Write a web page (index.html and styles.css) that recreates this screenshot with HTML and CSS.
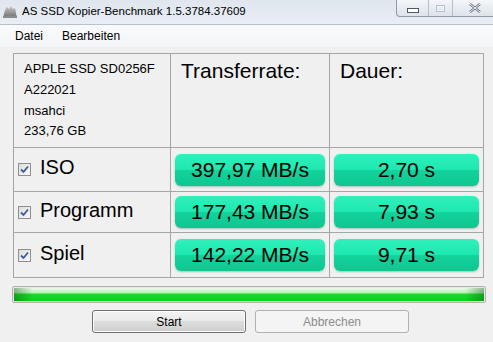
FILE: index.html
```html
<!DOCTYPE html>
<html lang="de">
<head>
  <meta charset="UTF-8">
  <title>AS SSD Kopier-Benchmark</title>
  <link rel="stylesheet" href="styles.css">
</head>
<body>
  <div class="window">
    <!-- Title bar -->
    <div class="titlebar">
      <svg class="app-icon" width="16" height="14" viewBox="0 0 16 14">
        <defs>
          <linearGradient id="ig" x1="0" y1="0" x2="0" y2="1">
            <stop offset="0" stop-color="#c8c8c8"/>
            <stop offset="1" stop-color="#6e6e6e"/>
          </linearGradient>
        </defs>
        <path d="M1 13 L3 5 L5 2 L7 4 L9 1 L11 4 L13 3 L15 13 Z" fill="url(#ig)"/>
        <rect x="1" y="11" width="14" height="2" fill="#8a8a8a"/>
      </svg>
      <span class="title">AS SSD Kopier-Benchmark 1.5.3784.37609</span>
      <div class="win-buttons">
        <div class="wb wb-min"><span class="min-glyph"></span></div>
        <div class="wb wb-max"><span class="max-glyph"></span></div>
        <div class="wb wb-close">
          <svg width="12" height="10" viewBox="0 0 12 10">
            <path d="M1 1 L11 9 M11 1 L1 9" stroke="#6c7480" stroke-width="2.4" fill="none"/>
            <path d="M1 1 L11 9 M11 1 L1 9" stroke="#f4f6f8" stroke-width="1" fill="none"/>
          </svg>
        </div>
      </div>
    </div>

    <!-- Menu -->
    <div class="menubar">
      <span class="menu-item">Datei</span>
      <span class="menu-item">Bearbeiten</span>
    </div>

    <div class="content">
      <div class="result-grid">
        <div class="cell drive-info">
          <div>APPLE SSD SD0256F</div>
          <div>A222021</div>
          <div>msahci</div>
          <div class="last">233,76 GB</div>
        </div>
        <div class="cell head">Transferrate:</div>
        <div class="cell head">Dauer:</div>

        <div class="cell test"><span class="check"><svg width="9" height="9" viewBox="0 0 9 9"><path d="M1 4.5 L3.5 7 L8 1.5" stroke="#3d5a9e" stroke-width="1.8" fill="none"/></svg></span><span class="label">ISO</span></div>
        <div class="cell"><div class="pill">397,97 MB/s</div></div>
        <div class="cell"><div class="pill">2,70 s</div></div>

        <div class="cell test"><span class="check"><svg width="9" height="9" viewBox="0 0 9 9"><path d="M1 4.5 L3.5 7 L8 1.5" stroke="#3d5a9e" stroke-width="1.8" fill="none"/></svg></span><span class="label">Programm</span></div>
        <div class="cell"><div class="pill">177,43 MB/s</div></div>
        <div class="cell"><div class="pill">7,93 s</div></div>

        <div class="cell test"><span class="check"><svg width="9" height="9" viewBox="0 0 9 9"><path d="M1 4.5 L3.5 7 L8 1.5" stroke="#3d5a9e" stroke-width="1.8" fill="none"/></svg></span><span class="label">Spiel</span></div>
        <div class="cell"><div class="pill">142,22 MB/s</div></div>
        <div class="cell"><div class="pill">9,71 s</div></div>
      </div>

      <div class="progress"><div class="progress-fill"></div></div>

      <div class="actions">
        <button class="btn">Start</button>
        <button class="btn" disabled>Abbrechen</button>
      </div>
    </div>
  </div>
</body>
</html>
```

FILE: styles.css
```css
body {
  margin: 0;
  width: 493px;
  height: 342px;
  overflow: hidden;
  font-family: 'Liberation Sans', Arial, sans-serif;
  background-color: #f0f0f0;
  color: #000;
}

.window {
  display: flex;
  flex-direction: column;
  height: 342px;
}

/* ===== Title bar ===== */
.titlebar {
  height: 25px;
  display: flex;
  align-items: flex-start;
  background: linear-gradient(#dfe6ee, #e9eef4);
  border-bottom: 1px solid #b9c2cc;
  box-sizing: border-box;
}

.app-icon {
  margin: 5px 0 0 2px;
}

.title {
  margin: 5px 0 0 4px;
  font-size: 11.5px;
  color: #000;
}

.win-buttons {
  margin-left: auto;
  display: flex;
  height: 17px;
  border: 1px solid #8f9aa8;
  border-top: none;
  border-radius: 0 0 4px 4px;
  margin-right: -4px;
  background: linear-gradient(#f4f6f9, #dde3ea);
  box-sizing: border-box;
}

.wb {
  display: flex;
  align-items: center;
  justify-content: center;
  border-right: 1px solid #b3bcc7;
}

.wb-min { width: 31px; }
.wb-max { width: 23px; }
.wb-close { width: 43px; border-right: none; }

.min-glyph {
  width: 10px;
  height: 3px;
  margin-top: 4px;
  border: 1px solid #4f5866;
  background: #fff;
}

.max-glyph {
  width: 7px;
  height: 5px;
  border: 1px solid #b8c0ca;
  box-shadow: inset 0 0 0 1px #f2f4f7;
}

/* ===== Menu ===== */
.menubar {
  height: 22px;
  display: flex;
  align-items: center;
  gap: 19px;
  padding-left: 15px;
  background: linear-gradient(#f9fafb, #f4f5f7);
  font-size: 12px;
}

/* ===== Results ===== */
.content {
  padding: 6px 0 0 13px;
}

.result-grid {
  display: grid;
  grid-template-columns: 156px 158px 153px;
  grid-template-rows: 93px 43px 40px 44px;
  gap: 1px;
  padding: 1px;
  width: max-content;
  background-color: #a6a6a6;
}

.cell {
  background-color: #f0f0f0;
  display: flex;
  align-items: center;
  padding: 0 4px;
}

.drive-info {
  flex-direction: column;
  align-items: flex-start;
  padding: 4px 0 0 10px;
  font-size: 13px;
  line-height: 21px;
}

.drive-info .last {
  line-height: 19px;
}

.head {
  align-items: flex-start;
  padding: 5px 0 0 10px;
  font-size: 21px;
}

.test {
  font-size: 20px;
  padding-left: 4px;
}

.label {
  margin-top: -4px;
}

.check {
  width: 11px;
  height: 11px;
  border: 1px solid #8e8f8f;
  background: linear-gradient(135deg, #dcdcdc, #fafafa);
  display: flex;
  align-items: center;
  justify-content: center;
  margin-right: 9px;
}

.pill {
  flex: 1;
  height: 32px;
  border-radius: 6px;
  display: flex;
  align-items: center;
  justify-content: center;
  font-size: 21px;
  background: linear-gradient(#30f0bb 0%, #1ee8b0 48%, #13d29b 52%, #10c690 100%);
  box-shadow: 0 1px 2px rgba(0, 120, 80, 0.35);
}

/* ===== Progress ===== */
.progress {
  width: 474px;
  height: 17px;
  margin: 8px 0 0 -1px;
  border: 1px solid #b2b2b2;
  border-radius: 2px;
  box-sizing: border-box;
  background: #e6e6e6;
  padding: 1px;
}

.progress-fill {
  height: 100%;
  background:
    linear-gradient(90deg, rgba(0, 80, 0, 0.4), rgba(0, 80, 0, 0) 4%, rgba(0, 80, 0, 0) 96%, rgba(0, 80, 0, 0.4)),
    linear-gradient(#eefaee 0%, #b6f2b6 35%, #1ad92d 50%, #05d31a 100%);
}

/* ===== Buttons ===== */
.actions {
  display: flex;
  gap: 9px;
  margin: 7px 0 0 79px;
}

.btn {
  width: 154px;
  height: 23px;
  border: 1px solid #707070;
  border-radius: 3px;
  font-family: 'Liberation Sans', Arial, sans-serif;
  font-size: 12px;
  color: #000;
  background: linear-gradient(#f2f2f2 0%, #ebebeb 45%, #dddddd 50%, #cfcfcf 100%);
  box-shadow: inset 0 0 0 1px #fcfcfc;
}

.btn:disabled {
  color: #8d8d8d;
  border-color: #adb2b5;
  background: #f4f4f4;
  box-shadow: none;
}
```
